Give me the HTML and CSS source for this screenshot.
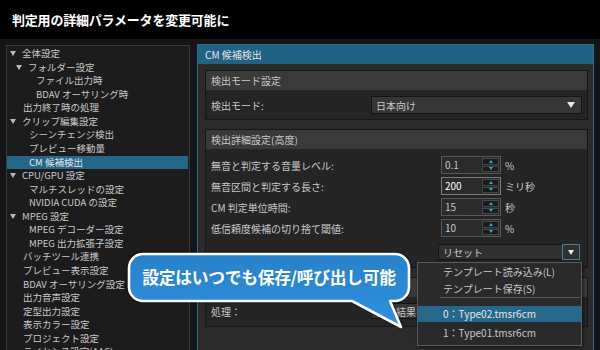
FILE: index.html
```html
<!DOCTYPE html>
<html lang="ja">
  <head>
    <meta charset="utf-8" />
    <meta name="viewport" content="width=device-width, initial-scale=1.0" />
    <title>CM 候補検出</title>
    <link rel="stylesheet" href="styles.css">
  </head>

  <body>
    <header class="title">判定用の詳細パラメータを変更可能に</header>

    <div class="main">
      <aside class="tree">
        <div class="row l0"><i class="tri"></i>全体設定</div>
        <div class="row l1"><i class="tri"></i>フォルダー設定</div>
        <div class="row l2">ファイル出力時</div>
        <div class="row l2">BDAV オーサリング時</div>
        <div class="row l0">出力終了時の処理</div>
        <div class="row l0"><i class="tri"></i>クリップ編集設定</div>
        <div class="row l1">シーンチェンジ検出</div>
        <div class="row l1">プレビュー移動量</div>
        <div class="row l1 sel">CM 候補検出</div>
        <div class="row l0"><i class="tri"></i>CPU/GPU 設定</div>
        <div class="row l1">マルチスレッドの設定</div>
        <div class="row l1">NVIDIA CUDA の設定</div>
        <div class="row l0"><i class="tri"></i>MPEG 設定</div>
        <div class="row l1">MPEG デコーダー設定</div>
        <div class="row l1">MPEG 出力拡張子設定</div>
        <div class="row l0">バッチツール連携</div>
        <div class="row l0">プレビュー表示設定</div>
        <div class="row l0">BDAV オーサリング設定</div>
        <div class="row l0">出力音声設定</div>
        <div class="row l0">定型出力設定</div>
        <div class="row l0">表示カラー設定</div>
        <div class="row l0">プロジェクト設定</div>
        <div class="row l0">ライセンス設定(AAC)</div>
      </aside>

      <section class="panel">
        <div class="panel-head">CM 候補検出</div>
        <div class="panel-body">
          <div class="group">
            <div class="group-head">検出モード設定</div>
            <div class="group-body g1">
              <div class="line">
                <span class="label short">検出モード:</span>
                <div class="select wide"><span>日本向け</span><i class="down"></i></div>
              </div>
            </div>
          </div>

          <div class="group">
            <div class="group-head">検出詳細設定(高度)</div>
            <div class="group-body g2">
              <div class="line">
                <span class="label">無音と判定する音量レベル:</span>
                <div class="num"><span>0.1</span><div class="spin"><b class="up"></b><b></b></div></div>
                <span class="unit">%</span>
              </div>
              <div class="line">
                <span class="label">無音区間と判定する長さ:</span>
                <div class="num focus"><span>200</span><div class="spin"><b class="up"></b><b></b></div></div>
                <span class="unit">ミリ秒</span>
              </div>
              <div class="line">
                <span class="label">CM 判定単位時間:</span>
                <div class="num"><span>15</span><div class="spin"><b class="up"></b><b></b></div></div>
                <span class="unit">秒</span>
              </div>
              <div class="line">
                <span class="label">低信頼度候補の切り捨て閾値:</span>
                <div class="num"><span>10</span><div class="spin"><b class="up"></b><b></b></div></div>
                <span class="unit">%</span>
              </div>
              <div class="select reset"><span>リセット</span><i class="btn"><i class="down"></i></i></div>
            </div>
          </div>

          <div class="group">
            <div class="group-head">検出結果の処理</div>
            <div class="group-body g3">
              <div class="line low">
                <span class="label short">処理：</span>
                <div class="select wide"><span>検出結果を保存する</span><i class="down"></i></div>
              </div>
            </div>
          </div>
        </div>
      </section>
    </div>

    <ul class="menu">
      <li>テンプレート読み込み(L)</li>
      <li>テンプレート保存(S)</li>
      <li class="sep"></li>
      <li class="hot">0：Type02.tmsr6cm</li>
      <li class="last">1：Type01.tmsr6cm</li>
    </ul>

    <div class="callout">
      <svg width="300" height="90" viewBox="0 0 300 90">
        <defs>
          <linearGradient id="fill" x1="0" y1="0" x2="0" y2="1">
            <stop offset="0" stop-color="#2882c8" />
            <stop offset="1" stop-color="#2e8fe0" />
          </linearGradient>
        </defs>
        <path d="M23 9 H275 A14 14 0 0 1 289 23 V42 A14 14 0 0 1 275 56 H270 L281 82 L232 56 H23 A14 14 0 0 1 9 42 V23 A14 14 0 0 1 23 9 Z"
              fill="url(#fill)" stroke="#fff" stroke-width="2.6" stroke-linejoin="round" />
      </svg>
      <p>設定はいつでも保存/呼び出し可能</p>
    </div>
  </body>
</html>
```

FILE: styles.css
```css
* {
  box-sizing: border-box;
  margin: 0;
  padding: 0;
}

body {
  width: 600px;
  height: 350px;
  overflow: hidden;
  background: #000;
  font-family: "Noto Sans CJK JP", "Noto Sans", sans-serif;
  font-size: 10px;
  color: #c8c8c8;
  position: relative;
}

.title {
  height: 39px;
  padding-left: 12px;
  line-height: 39px;
  font-size: 13px;
  font-weight: bold;
  letter-spacing: -0.2px;
  color: #fff;
}

.main {
  display: flex;
  height: 311px;
  padding: 5px 6px 0 6px;
  gap: 7px;
  background: #151515;
  overflow: hidden;
}

/* left tree */
.tree {
  width: 184px;
  margin-top: 1px;
  padding-top: 1px;
  background: #1c1c1c;
  border: 1px solid #3a3a3a;
  border-bottom: 0;
  flex-shrink: 0;
  font-size: 9.5px;
}

.row {
  height: 13.57px;
  line-height: 13.57px;
  white-space: nowrap;
  margin-right: 1px;
}

.l0 {
  padding-left: 16px;
}

.l1 {
  padding-left: 22px;
}

.l2 {
  padding-left: 29px;
}

.sel {
  background: #23688a;
  color: #e8e8e8;
}

.tri {
  display: inline-block;
  width: 0;
  height: 0;
  margin-left: -13px;
  margin-right: 6px;
  vertical-align: 1px;
  border-left: 3.5px solid transparent;
  border-right: 3.5px solid transparent;
  border-top: 5px solid #b8b8b8;
}

/* right panel */
.panel {
  width: 397px;
  flex-shrink: 0;
  background: #2b2b2b;
  border: 1px solid #2a6d8e;
  border-bottom: 0;
}

.panel-head {
  height: 19px;
  line-height: 19px;
  padding-left: 7px;
  background: #1f6283;
  color: #e4e4e4;
}

.panel-body {
  padding: 6px 5px 0 7px;
  display: flex;
  flex-direction: column;
  gap: 9px;
}

.group {
  border: 1px solid #171717;
  background: #252525;
}

.group-head {
  height: 19px;
  line-height: 19px;
  padding-left: 5px;
  background: #3a3a3a;
  color: #c8c8c8;
}

.group-body {
  padding: 0 5px 0 5px;
}

.g1 {
  padding-top: 6px;
  height: 29px;
}

.g2 {
  padding-top: 7px;
  padding-bottom: 7px;
  display: flex;
  flex-direction: column;
  gap: 3px;
}

.g3 {
  padding-top: 6px;
  height: 29px;
}

.line {
  display: flex;
  align-items: center;
  height: 18px;
}

.line.low {
  height: 16px;
}

.label {
  width: 230px;
  flex-shrink: 0;
}

.label.short {
  width: 160px;
}

.select {
  display: flex;
  align-items: center;
  height: 18px;
  background: #363636;
  border: 1px solid #141414;
  padding-left: 4px;
}

.low .select {
  height: 16px;
}

.select span {
  flex: 1;
}

.select.wide {
  width: 211px;
  padding-right: 6px;
}

.down {
  display: inline-block;
  width: 0;
  height: 0;
  border-left: 4px solid transparent;
  border-right: 4px solid transparent;
  border-top: 6px solid #e6e6e6;
}

.reset {
  width: 142px;
  height: 16px;
  margin-top: 4px;
  margin-left: 227px;
  background: #303030;
}

.reset .btn {
  width: 18px;
  height: 16px;
  margin-right: -1px;
  border: 1px solid #3f7ea0;
  display: flex;
  align-items: center;
  justify-content: center;
}

.reset .down {
  border-left-width: 3px;
  border-right-width: 3px;
  border-top-width: 5px;
}

.num {
  display: flex;
  width: 60px;
  height: 18px;
  border: 1px solid #575757;
  background: #2b2b2b;
}

.num span {
  flex: 1;
  padding-left: 3px;
  line-height: 16px;
}

.num.focus {
  border-color: #7c7c7c;
}

.num.focus span {
  color: #fff;
}

.spin {
  width: 18px;
  padding: 1px 1px 1px 0;
  display: flex;
  flex-direction: column;
  gap: 1px;
}

.spin b {
  flex: 1;
  background: #1b1b1b;
  border: 1px solid #474747;
  display: flex;
  align-items: center;
  justify-content: center;
}

.spin b::after {
  content: "";
  width: 0;
  height: 0;
  border-left: 2.5px solid transparent;
  border-right: 2.5px solid transparent;
  border-top: 3px solid #2aaee0;
}

.spin b.up::after {
  border-top: 0;
  border-bottom: 3px solid #2aaee0;
}

.unit {
  margin-left: 4px;
}

/* drop-down menu */
.menu {
  position: absolute;
  left: 417px;
  top: 262px;
  width: 165px;
  height: 84px;
  list-style: none;
  background: #2a2a2a;
  border: 1px solid #5a5a5a;
  box-shadow: 1px 1px 3px rgba(0, 0, 0, 0.6);
}

.menu li {
  height: 17px;
  line-height: 17px;
  padding-left: 25px;
}

.menu li.sep {
  height: 1px;
  margin: 0 1px 8px 22px;
  background: #5a5a5a;
}

.menu li.hot {
  height: 16px;
  line-height: 16px;
  background: #24698b;
  color: #e6e6e6;
}

.menu li.last {
  margin-top: 2px;
  height: 18px;
  line-height: 18px;
}

/* callout */
.callout {
  position: absolute;
  left: 120px;
  top: 245px;
  width: 300px;
  height: 90px;
}

.callout svg {
  display: block;
  filter: drop-shadow(0 0 1px rgba(0, 0, 0, 0.9));
}

.callout p {
  position: absolute;
  left: 9px;
  top: 9px;
  width: 280px;
  height: 47px;
  line-height: 47px;
  text-align: center;
  font-size: 16.8px;
  font-weight: bold;
  color: #fff;
  letter-spacing: -0.3px;
}
```
